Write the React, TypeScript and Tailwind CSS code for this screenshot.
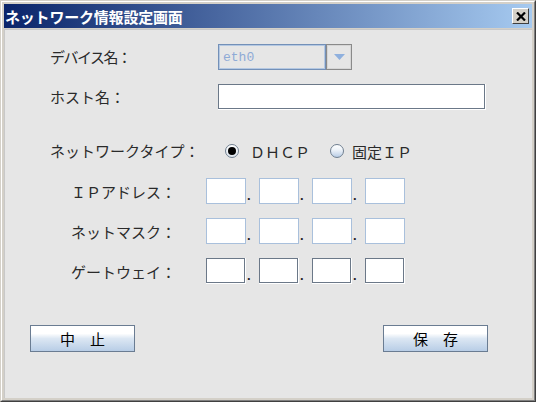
import React from "react";

const jp = "font-['Noto_Sans_CJK_JP',sans-serif]";
const label = `${jp} text-[15px] text-[#2a2a2a] leading-none whitespace-nowrap`;

function IpBox({ dark }: { dark?: boolean }) {
  if (dark) {
    return (
      <div className="border-r border-b border-white">
        <div className="w-[39px] h-[25px] bg-white border border-[#6b7888]" />
      </div>
    );
  }
  return <div className="w-[40px] h-[26px] bg-white border border-[#a9c0dc]" />;
}

function Dot() {
  return (
    <div className="w-[13px] h-[26px] flex items-end pb-[2px] pl-[1px]">
      <span className="font-['Liberation_Sans',sans-serif] font-bold text-[13px] leading-none text-[#222]">.</span>
    </div>
  );
}

function IpRow({ text, dark }: { text: string; dark?: boolean }) {
  return (
    <div className="flex items-center h-[26px] mt-[14px]">
      <div className="w-[201px] pr-[30px] flex justify-end">
        <span className={label}>{text}</span>
      </div>
      <IpBox dark={dark} />
      <Dot />
      <IpBox dark={dark} />
      <Dot />
      <IpBox dark={dark} />
      <Dot />
      <IpBox dark={dark} />
    </div>
  );
}

function Radio({ checked }: { checked?: boolean }) {
  return (
    <div
      className={`w-[14px] h-[14px] rounded-full border border-[#6f7f90] flex items-center justify-center ${
        checked
          ? "bg-[linear-gradient(to_bottom,#ffffff,#dfe6ee)]"
          : "bg-[linear-gradient(to_bottom,#ffffff_0%,#eef3f9_40%,#b9cde6_100%)]"
      }`}
    >
      {checked && <div className="w-[8px] h-[8px] rounded-full bg-black" />}
    </div>
  );
}

function Btn({ text }: { text: string }) {
  return (
    <div className="w-[105px] h-[27px] border border-[#6a7c92] bg-[linear-gradient(to_bottom,#ffffff_0%,#ffffff_30%,#dce7f3_50%,#b8cde6_100%)] flex items-center justify-center">
      <span className={`${jp} text-[15px] leading-none text-black`}>{text}</span>
    </div>
  );
}

export default function App() {
  return (
    <div className="w-[536px] h-[402px] bg-[#d4d0c8] border border-t-[#d4d0c8] border-l-[#d4d0c8] border-r-[#404040] border-b-[#404040]">
      <div className="h-full border border-t-white border-l-white border-r-[#808080] border-b-[#808080] p-[2px] flex flex-col">
        {/* Title bar */}
        <div className="h-[24px] flex items-center justify-between bg-[linear-gradient(to_right,#0a246a,#a6caf0)] pl-[1px] pr-[3px]">
          <span className={`${jp} text-[15px] font-bold text-white leading-none tracking-[-0.2px]`}>
            ネットワーク情報設定画面
          </span>
          <div className="w-[17px] h-[16px] bg-[#d4d0c8] border border-t-white border-l-white border-r-[#404040] border-b-[#404040] flex items-center justify-center">
            <svg width="10" height="9" viewBox="0 0 10 9">
              <path d="M1 0.5 L9 8.5 M9 0.5 L1 8.5" stroke="black" strokeWidth="2.2" />
            </svg>
          </div>
        </div>

        {/* Content */}
        <div className="flex-1 mt-[1px] bg-[#e6e6e6] pt-[14px] border-l border-t border-[#c8c8c8]">
          {/* Device */}
          <div className="flex items-center h-[26px]">
            <div className="w-[213px] pl-[45px]">
              <span className={`${label} tracking-[-1.5px]`}>デバイス名：</span>
            </div>
            <div className="flex h-[26px]">
              <div className="w-[108px] h-[26px] border border-[#7390b8] shadow-[inset_0_0_0_1px_#b4c8e2] bg-[#e6e6e6] flex items-center pl-[4px]">
                <span className="font-['Liberation_Mono',monospace] text-[13px] leading-none text-[#8eaad6]">eth0</span>
              </div>
              <div className="w-[26px] h-[26px] border border-[#8a8a8a] shadow-[inset_0_0_0_1px_#d6d6d6] bg-[#e6e6e6] flex items-center justify-center">
                <svg width="11" height="6" viewBox="0 0 11 6">
                  <path d="M0 0 L11 0 L5.5 6 Z" fill="#8fb0de" />
                </svg>
              </div>
            </div>
          </div>

          {/* Host */}
          <div className="flex items-center h-[26px] mt-[14px]">
            <div className="w-[213px] pl-[45px]">
              <span className={label}>ホスト名：</span>
            </div>
            <div className="border-r border-b border-white">
              <div className="w-[267px] h-[25px] bg-white border border-[#6b7888]" />
            </div>
          </div>

          {/* Network type */}
          <div className="flex items-center h-[26px] mt-[28px]">
            <div className="w-[220px] pl-[45px]">
              <span className={label}>ネットワークタイプ：</span>
            </div>
            <Radio checked />
            <span className={`${label} ml-[11px]`}>ＤＨＣＰ</span>
            <div className="ml-[20px]">
              <Radio />
            </div>
            <span className={`${label} ml-[8px]`}>固定ＩＰ</span>
          </div>

          <IpRow text="ＩＰアドレス：" />
          <IpRow text="ネットマスク：" />
          <IpRow text="ゲートウェイ：" dark />

          {/* Buttons */}
          <div className="flex justify-between mt-[41px] pl-[25px] pr-[44px]">
            <Btn text="中　止" />
            <Btn text="保　存" />
          </div>
        </div>
      </div>
    </div>
  );
}
